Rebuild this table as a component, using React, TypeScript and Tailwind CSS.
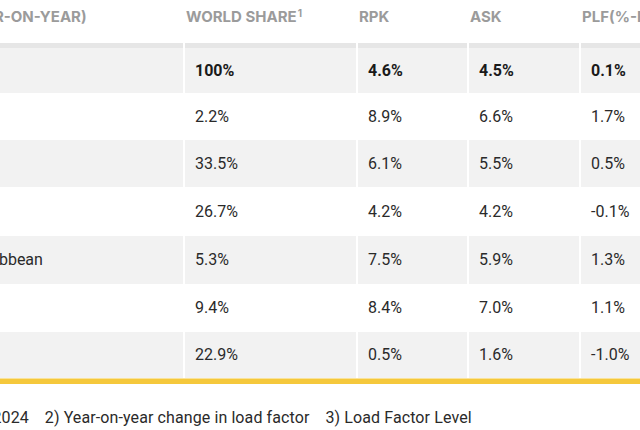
import React from "react";

const rows = [
  { region: "Total Market", share: "100%", rpk: "4.6%", ask: "4.5%", plf: "0.1%", bold: true },
  { region: "Africa", share: "2.2%", rpk: "8.9%", ask: "6.6%", plf: "1.7%" },
  { region: "Asia Pacific", share: "33.5%", rpk: "6.1%", ask: "5.5%", plf: "0.5%" },
  { region: "Europe", share: "26.7%", rpk: "4.2%", ask: "4.2%", plf: "-0.1%" },
  { region: "Latin America & Caribbean", share: "5.3%", rpk: "7.5%", ask: "5.9%", plf: "1.3%" },
  { region: "Middle East", share: "9.4%", rpk: "8.4%", ask: "7.0%", plf: "1.1%" },
  { region: "North America", share: "22.9%", rpk: "0.5%", ask: "1.6%", plf: "-1.0%" },
];

const heights = ["h-[50px]", "h-[47px]", "h-[47px]", "h-[49px]", "h-[48px]", "h-[48px]", "h-[46px]"];

export default function App() {
  const cols = "grid grid-cols-[331px_171px_109px_110px_160px] gap-x-[2px]";
  return (
    <div className="w-[640px] h-[430px] overflow-hidden bg-white" style={{ fontFamily: "Roboto, 'Noto Sans', sans-serif" }}>
      <div className="-ml-[148px] w-[900px]">
        <div
          className={`${cols} h-[43px] text-[15px] font-bold text-[#9b9b9b] uppercase`}
          style={{ fontFamily: "Inter, sans-serif" }}
        >
          <div className="pt-[6px] pl-[44px] whitespace-nowrap">Region (Year-on-Year)</div>
          <div className="pt-[6px] pl-[1px]">
            World Share<sup className="text-[10px] ml-[1px]">1</sup>
          </div>
          <div className="pt-[6px] pl-[1px]">RPK</div>
          <div className="pt-[6px] pl-[1px]">ASK</div>
          <div className="pt-[6px] pl-[1px] whitespace-nowrap">PLF(%-PT)<sup className="text-[10px]">2</sup></div>
        </div>
        {rows.map((r, i) => {
          const gray = i % 2 === 0;
          const top = i === 0 ? "border-t-[5px] border-[#e6e6e6]" : "";
          const base = `${gray ? "bg-[#f2f2f2]" : "bg-white"} ${top} flex items-center ${heights[i]}`;
          const cell = `${base} pl-[10px]`;
          return (
            <div
              key={r.region}
              className={`${cols} text-[16px] ${r.bold ? "font-bold text-[#1a1a1a]" : "text-[#2a2a2a]"}`}
            >
              <div className={`${base} pl-[2px] whitespace-nowrap`}>{r.region}</div>
              <div className={cell}>{r.share}</div>
              <div className={cell}>{r.rpk}</div>
              <div className={cell}>{r.ask}</div>
              <div className={cell}>{r.plf}</div>
            </div>
          );
        })}
        <div className="h-[6px] bg-[#f5c83c] border-t border-[#f9e39a]" />
        <div className="mt-[22px] -ml-[35px] flex gap-[16px] text-[16px] tracking-[0.1px] text-[#2a2a2a] whitespace-nowrap">
          <span>1) % of industry RPKs in 2024</span>
          <span>2) Year-on-year change in load factor</span>
          <span>3) Load Factor Level</span>
        </div>
      </div>
    </div>
  );
}
